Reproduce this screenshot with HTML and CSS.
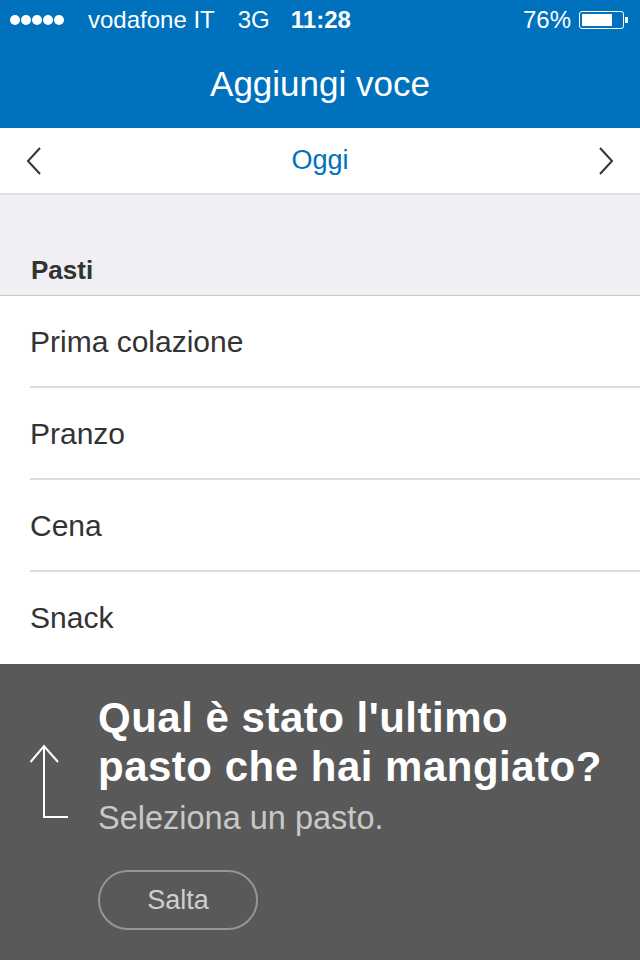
FILE: index.html
```html
<!DOCTYPE html>
<html lang="it">
<head>
    <meta charset="UTF-8">
    <meta name="viewport" content="width=device-width, initial-scale=1.0">
    <title>Aggiungi voce</title>
    <link rel="stylesheet" href="styles.css">
</head>

<body>
    <div class="screen">
        <!-- barra di stato -->
        <div class="statusBar">
            <div class="left">
                <span class="dots"><i></i><i></i><i></i><i></i><i></i></span>
                <span class="carrier">vodafone IT</span>
                <span class="net">3G</span>
                <span class="time">11:28</span>
            </div>
            <div class="right">
                <span class="pct">76%</span>
                <span class="battery"><span class="level"></span></span>
                <span class="nub"></span>
            </div>
        </div>

        <!-- titolo -->
        <div class="navBar">Aggiungi voce</div>

        <!-- data -->
        <div class="dateBar">
            <svg class="chev" width="16" height="28" viewBox="0 0 16 28">
                <polyline points="14,1 2,14 14,27" fill="none" stroke="#333" stroke-width="2" />
            </svg>
            <span class="day">Oggi</span>
            <svg class="chev" width="16" height="28" viewBox="0 0 16 28">
                <polyline points="2,1 14,14 2,27" fill="none" stroke="#333" stroke-width="2" />
            </svg>
        </div>

        <div class="sectionHead">Pasti</div>

        <ul class="list">
            <li>Prima colazione</li>
            <li>Pranzo</li>
            <li>Cena</li>
            <li>Snack</li>
        </ul>

        <!-- suggerimento -->
        <div class="tip">
            <svg class="arrow" width="40" height="76" viewBox="0 0 40 76">
                <path d="M14 2 V73 H38" fill="none" stroke="#fff" stroke-width="2" />
                <path d="M0.5 18 L14 2 L28 18" fill="none" stroke="#fff" stroke-width="2" />
            </svg>
            <div class="tipText">
                <h2>Qual è stato l'ultimo pasto che hai mangiato?</h2>
                <p>Seleziona un pasto.</p>
                <a class="skip" href="javascript:;">Salta</a>
            </div>
        </div>
    </div>
</body>

</html>
```

FILE: styles.css
```css
* {
    padding: 0;
    margin: 0;
    box-sizing: border-box;
}

body {
    font-family: "Liberation Sans", Arial, sans-serif;
    background: #fff;
}

.screen {
    width: 640px;
    height: 960px;
    position: relative;
    overflow: hidden;
}

.statusBar {
    height: 40px;
    background: #0071bc;
    color: #fff;
    font-size: 24px;
    line-height: 40px;
    display: flex;
    justify-content: space-between;
    padding: 0 12px 0 10px;
}

.statusBar .left,
.statusBar .right {
    display: flex;
    align-items: center;
}

.statusBar .dots {
    display: flex;
    gap: 1px;
    margin-right: 24px;
}

.statusBar .dots i {
    display: block;
    width: 10px;
    height: 10px;
    border-radius: 50%;
    background: #fff;
}

.statusBar .net {
    margin-left: 23px;
}

.statusBar .time {
    margin-left: 21px;
    font-weight: bold;
}

.statusBar .pct {
    margin-right: 8px;
}

.statusBar .battery {
    width: 45px;
    height: 18px;
    border: 1px solid #fff;
    border-radius: 3px;
    padding: 2px;
    display: flex;
}

.statusBar .battery .level {
    width: 76%;
    background: #fff;
}

.statusBar .nub {
    width: 3px;
    height: 6px;
    background: #fff;
    margin-left: 1px;
}

.navBar {
    height: 88px;
    background: #0071bc;
    color: #fff;
    font-size: 35px;
    line-height: 88px;
    text-align: center;
}

.dateBar {
    height: 67px;
    border-bottom: 2px solid #dedede;
    display: flex;
    align-items: center;
    justify-content: space-between;
    padding: 0 26px;
}

.dateBar .day {
    color: #0071bc;
    font-size: 27px;
}

.sectionHead {
    height: 101px;
    background: #efeff4;
    border-bottom: 1px solid #c8c8cc;
    padding: 0 0 10px 31px;
    display: flex;
    align-items: flex-end;
    font-size: 26px;
    line-height: 30px;
    font-weight: bold;
    color: #333;
}

.list {
    list-style: none;
}

.list li {
    margin-left: 30px;
    height: 92px;
    border-bottom: 2px solid #dcdcdc;
    font-size: 30px;
    line-height: 92px;
    color: #333;
}

.list li:last-child {
    border-bottom: none;
}

.tip {
    position: absolute;
    left: 0;
    right: 0;
    bottom: 0;
    height: 296px;
    background: #595959;
    display: flex;
    align-items: flex-start;
    padding: 29px 20px 0 30px;
}

.tip .arrow {
    flex: none;
    margin-top: 51px;
    margin-right: 28px;
}

.tip h2 {
    color: #fff;
    font-size: 42px;
    line-height: 49px;
    letter-spacing: 0.5px;
}

.tip p {
    margin-top: 7px;
    color: #c8c8c8;
    font-size: 32.5px;
    line-height: 40px;
}

.tip .skip {
    display: block;
    margin-top: 32px;
    width: 160px;
    height: 60px;
    border: 2px solid #959595;
    border-radius: 30px;
    color: #cfcfcf;
    font-size: 27px;
    line-height: 56px;
    text-align: center;
    text-decoration: none;
}
```
